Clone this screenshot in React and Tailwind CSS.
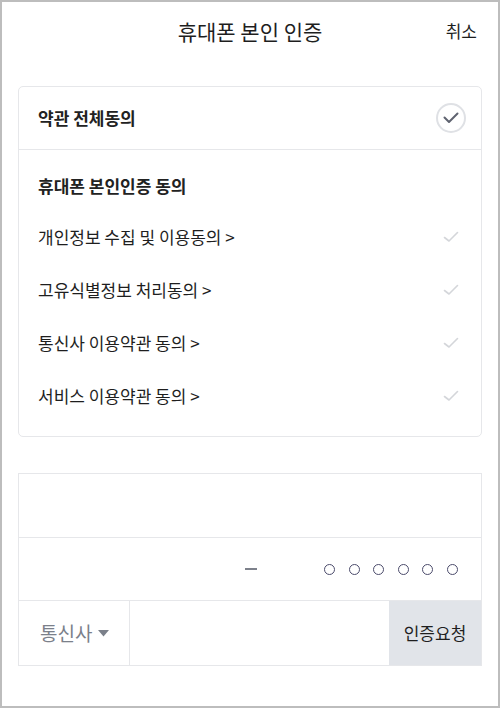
import React from "react";

const terms = [
  "개인정보 수집 및 이용동의 >",
  "고유식별정보 처리동의 >",
  "통신사 이용약관 동의 >",
  "서비스 이용약관 동의 >",
];

function SmallCheck() {
  return (
    <svg width="16" height="12" viewBox="0 0 16 12" fill="none">
      <path d="M1.5 6.5 L6 10 L14.5 1.5" stroke="#d4d6da" strokeWidth="1.6" strokeLinecap="round" strokeLinejoin="round" />
    </svg>
  );
}

export default function App() {
  return (
    <div
      className="w-[500px] h-[708px] bg-white border-2 border-[#bdbdbd] text-[#222]"
      style={{ fontFamily: '"Noto Sans CJK KR", "Noto Sans", sans-serif' }}
    >
      {/* header */}
      <div className="relative h-[60px] flex items-center justify-center">
        <h1 className="text-[21px] text-[#1e1e1e]">휴대폰 본인 인증</h1>
        <button className="absolute right-[21px] top-[16px] text-[17px] text-[#1e1e1e]">취소</button>
      </div>

      {/* terms card */}
      <div className="mx-[16px] mt-[24px] h-[351px] border border-[#e6e7ea] rounded-[5px]">
        <div className="h-[63px] flex items-center justify-between pl-[19px] pr-[15px] border-b border-[#e6e7ea]">
          <span className="text-[17px] font-bold">약관 전체동의</span>
          <div className="w-[30px] h-[30px] rounded-full border-2 border-[#dfe1e5] flex items-center justify-center">
            <svg width="16" height="12" viewBox="0 0 16 12" fill="none">
              <path d="M1.5 5.5 L6 10 L14.5 1.5" stroke="#5f6370" strokeWidth="2" strokeLinecap="round" strokeLinejoin="round" />
            </svg>
          </div>
        </div>
        <div className="pl-[19px] pr-[22px] pt-[21px]">
          <div className="text-[17px] font-bold h-[30px] flex items-center">휴대폰 본인인증 동의</div>
          <ul className="mt-[9px]">
            {terms.map((t) => (
              <li key={t} className="h-[53px] flex items-center justify-between">
                <span className="text-[17px] text-[#1e1e1e]">{t}</span>
                <SmallCheck />
              </li>
            ))}
          </ul>
        </div>
      </div>

      {/* phone form */}
      <div className="mx-[16px] mt-[36px] border border-[#e6e7ea]">
        <div className="h-[64px] border-b border-[#e6e7ea]" />
        <div className="h-[63px] border-b border-[#e6e7ea] flex items-center">
          <div className="w-[226px]" />
          <div className="w-[12px] h-[2.5px] bg-[#7d818b]" />
          <div className="ml-[67px] flex gap-[13.5px]">
            {[0, 1, 2, 3, 4, 5].map((i) => (
              <div key={i} className="w-[11px] h-[11px] rounded-full border-[1.5px] border-[#4b4b6b]" />
            ))}
          </div>
        </div>
        <div className="h-[64px] flex">
          <div className="w-[111px] border-r border-[#e6e7ea] flex items-center pl-[21px] gap-[6px]">
            <span className="text-[19px] text-[#7b808a]">통신사</span>
            <svg width="11" height="7" viewBox="0 0 11 7">
              <path d="M0 0 H11 L5.5 6.5 Z" fill="#7b808a" />
            </svg>
          </div>
          <div className="flex-1" />
          <button className="w-[92px] bg-[#e1e4e9] text-[17px] text-[#1e1e1e]">인증요청</button>
        </div>
      </div>
    </div>
  );
}
